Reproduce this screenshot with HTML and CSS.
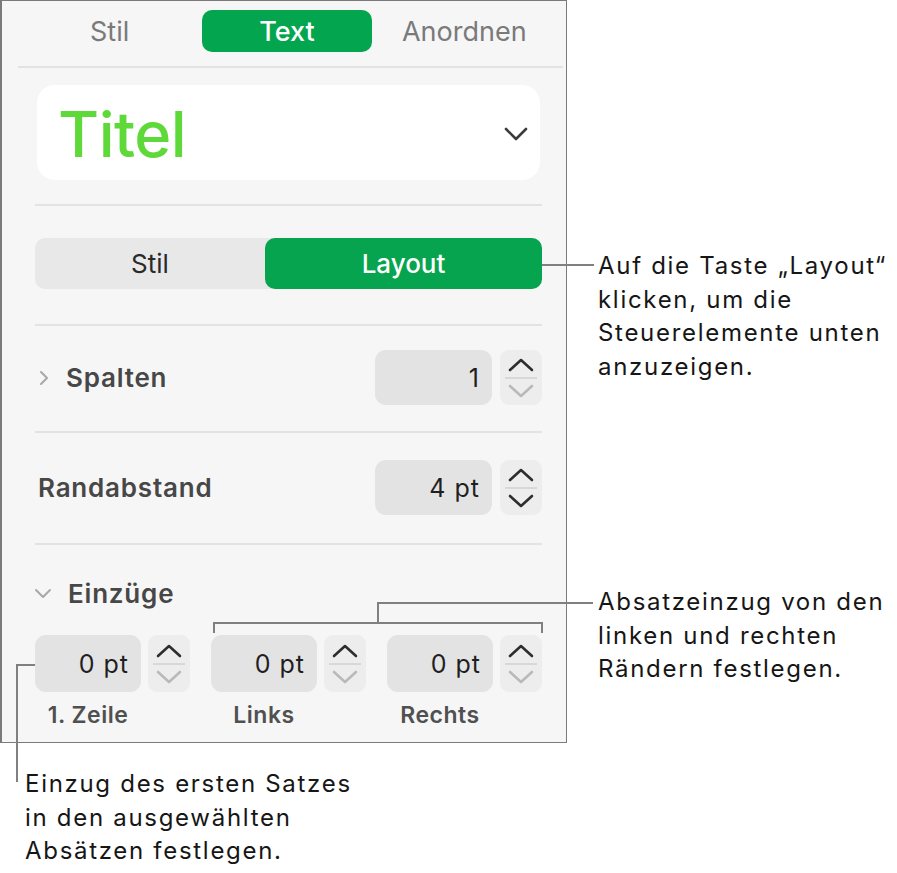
FILE: index.html
```html
<html>
    <head>
        <title>Text Layout</title>
        <link rel="stylesheet" href="styles.css">
    </head>
    <body>
        <div class="stage">
            <!--Seitenleiste mit den Textoptionen-->
            <div class="panel">
                <div class="tabs">
                    <div class="tab">Stil</div>
                    <div class="tab active">Text</div>
                    <div class="tab">Anordnen</div>
                </div>
                <div class="rule wide"></div>

                <div class="styleBox">
                    <span class="styleName">Titel</span>
                    <svg class="dropChevron" width="24" height="14" viewBox="0 0 24 14"><polyline points="2,2 12,12 22,2" fill="none" stroke="#3c3c3c" stroke-width="2.6" stroke-linecap="round" stroke-linejoin="round"/></svg>
                </div>
                <div class="rule r1"></div>

                <div class="segment">
                    <div class="segItem">Stil</div>
                    <div class="segItem on">Layout</div>
                </div>
                <div class="rule r2"></div>

                <div class="row r-spalten">
                    <svg class="disclosure" width="12" height="16" viewBox="0 0 12 16"><polyline points="3,2 9,8 3,14" fill="none" stroke="#a8a8a8" stroke-width="2" stroke-linecap="round" stroke-linejoin="round"/></svg>
                    <span class="rowLabel">Spalten</span>
                    <div class="field wideField">1</div>
                    <div class="stepper">
                        <svg class="up" width="26" height="14" viewBox="0 0 26 14"><polyline points="2,12 13,2 24,12" fill="none" stroke="#2e2e2e" stroke-width="2.6" stroke-linecap="round" stroke-linejoin="round"/></svg>
                        <span class="stepLine"></span>
                        <svg class="down" width="26" height="14" viewBox="0 0 26 14"><polyline points="2,2 13,12 24,2" fill="none" stroke="#b9b9b9" stroke-width="2.6" stroke-linecap="round" stroke-linejoin="round"/></svg>
                    </div>
                </div>
                <div class="rule r3"></div>

                <div class="row r-rand">
                    <span class="rowLabel noIcon">Randabstand</span>
                    <div class="field wideField">4 pt</div>
                    <div class="stepper">
                        <svg class="up" width="26" height="14" viewBox="0 0 26 14"><polyline points="2,12 13,2 24,12" fill="none" stroke="#2e2e2e" stroke-width="2.6" stroke-linecap="round" stroke-linejoin="round"/></svg>
                        <span class="stepLine"></span>
                        <svg class="down" width="26" height="14" viewBox="0 0 26 14"><polyline points="2,2 13,12 24,2" fill="none" stroke="#2e2e2e" stroke-width="2.6" stroke-linecap="round" stroke-linejoin="round"/></svg>
                    </div>
                </div>
                <div class="rule r4"></div>

                <div class="row r-einzug">
                    <svg class="disclosure open" width="18" height="12" viewBox="0 0 18 12"><polyline points="2,3 9,10 16,3" fill="none" stroke="#a8a8a8" stroke-width="2" stroke-linecap="round" stroke-linejoin="round"/></svg>
                    <span class="rowLabel">Einzüge</span>
                </div>

                <div class="indents">
                    <div class="indent">
                        <div class="indentTop">
                            <div class="field smallField">0 pt</div>
                            <div class="stepper">
                                <svg class="up" width="26" height="14" viewBox="0 0 26 14"><polyline points="2,12 13,2 24,12" fill="none" stroke="#2e2e2e" stroke-width="2.6" stroke-linecap="round" stroke-linejoin="round"/></svg>
                                <span class="stepLine"></span>
                                <svg class="down" width="26" height="14" viewBox="0 0 26 14"><polyline points="2,2 13,12 24,2" fill="none" stroke="#b9b9b9" stroke-width="2.6" stroke-linecap="round" stroke-linejoin="round"/></svg>
                            </div>
                        </div>
                        <div class="indentLabel">1. Zeile</div>
                    </div>
                    <div class="indent">
                        <div class="indentTop">
                            <div class="field smallField">0 pt</div>
                            <div class="stepper">
                                <svg class="up" width="26" height="14" viewBox="0 0 26 14"><polyline points="2,12 13,2 24,12" fill="none" stroke="#2e2e2e" stroke-width="2.6" stroke-linecap="round" stroke-linejoin="round"/></svg>
                                <span class="stepLine"></span>
                                <svg class="down" width="26" height="14" viewBox="0 0 26 14"><polyline points="2,2 13,12 24,2" fill="none" stroke="#b9b9b9" stroke-width="2.6" stroke-linecap="round" stroke-linejoin="round"/></svg>
                            </div>
                        </div>
                        <div class="indentLabel">Links</div>
                    </div>
                    <div class="indent">
                        <div class="indentTop">
                            <div class="field smallField">0 pt</div>
                            <div class="stepper">
                                <svg class="up" width="26" height="14" viewBox="0 0 26 14"><polyline points="2,12 13,2 24,12" fill="none" stroke="#2e2e2e" stroke-width="2.6" stroke-linecap="round" stroke-linejoin="round"/></svg>
                                <span class="stepLine"></span>
                                <svg class="down" width="26" height="14" viewBox="0 0 26 14"><polyline points="2,2 13,12 24,2" fill="none" stroke="#b9b9b9" stroke-width="2.6" stroke-linecap="round" stroke-linejoin="round"/></svg>
                            </div>
                        </div>
                        <div class="indentLabel">Rechts</div>
                    </div>
                </div>
            </div>

            <!--Hinweislinien und Beschriftungen-->
            <div class="line lineLayout"></div>
            <div class="note noteLayout">Auf die Taste „Layout“<br>klicken, um die<br>Steuerelemente unten<br>anzuzeigen.</div>

            <div class="line bracketH"></div>
            <div class="line bracketL"></div>
            <div class="line bracketR"></div>
            <div class="line bracketStem"></div>
            <div class="line bracketOut"></div>
            <div class="note noteRand">Absatzeinzug von den<br>linken und rechten<br>Rändern festlegen.</div>

            <div class="line firstH"></div>
            <div class="line firstV"></div>
            <div class="note noteFirst">Einzug des ersten Satzes<br>in den ausgewählten<br>Absätzen festlegen.</div>
        </div>
    </body>
</html>
```

FILE: styles.css
```css
body
{
    margin: 0;
    background-color: #ffffff;
    font-family: Inter, "Noto Sans", sans-serif;
}
.stage
{
    position: relative;
    width: 897px;
    height: 873px;
}
.panel
{
    box-sizing: border-box;
    width: 567px;
    height: 743px;
    border: 1px solid #7a7a7a;
    border-left-width: 2px;
    background-color: #f6f6f6;
    padding: 0 24px 0 33px;
    display: flex;
    flex-direction: column;
}
.tabs
{
    display: grid;
    grid-template-columns: repeat(3, 1fr);
    margin: 9px -11px 0 -14px;
    height: 42px;
}
.tab
{
    display: flex;
    align-items: center;
    justify-content: center;
    font-size: 27px;
    color: #7a7a7a;
    margin: 0 4px;
}
.tab.active
{
    background-color: #04a54f;
    color: #ffffff;
    font-weight: 500;
    border-radius: 10px;
}
.rule
{
    height: 2px;
    background-color: #e3e3e3;
}
.rule.wide
{
    margin: 14px -21px 0 -17px;
}
.styleBox
{
    margin: 17px 2px 0 2px;
    height: 95px;
    background-color: #ffffff;
    border-radius: 18px;
    display: flex;
    align-items: center;
    justify-content: space-between;
    padding: 0 12px 0 21px;
}
.styleName
{
    font-size: 63px;
    font-weight: 500;
    color: #5fd93a;
    letter-spacing: -0.5px;
    margin-top: 2px;
}
.dropChevron
{
    margin-top: 2px;
}
.r1
{
    margin-top: 24px;
}
.segment
{
    margin-top: 32px;
    height: 51px;
    display: flex;
    background-color: #e8e8e8;
    border-radius: 10px;
}
.segItem
{
    display: flex;
    align-items: center;
    justify-content: center;
    width: 230px;
    font-size: 26px;
    color: #2a2a2a;
}
.segItem.on
{
    flex: 1;
    background-color: #06a44e;
    color: #ffffff;
    font-weight: 500;
    border-radius: 10px;
}
.r2
{
    margin-top: 35px;
}
.row
{
    display: flex;
    align-items: center;
}
.r-spalten
{
    margin-top: 24px;
    height: 55px;
}
.r3
{
    margin-top: 26px;
}
.r-rand
{
    margin-top: 27px;
    height: 55px;
}
.r4
{
    margin-top: 28px;
}
.r-einzug
{
    margin-top: 34px;
    height: 28px;
}
.disclosure
{
    margin-left: 3px;
    width: 12px;
}
.disclosure.open
{
    margin-left: -1px;
    width: 18px;
}
.rowLabel
{
    font-size: 26px;
    font-weight: 600;
    letter-spacing: 0.8px;
    color: #474747;
    margin-left: 16px;
    flex: 1;
}
.rowLabel.noIcon
{
    margin-left: 3px;
}
.field
{
    box-sizing: border-box;
    height: 55px;
    background-color: #e3e3e3;
    border-radius: 11px;
    display: flex;
    align-items: center;
    justify-content: flex-end;
    padding-right: 12px;
    font-size: 25px;
    letter-spacing: 1px;
    color: #1f1f1f;
}
.wideField
{
    width: 117px;
}
.stepper
{
    box-sizing: border-box;
    width: 42px;
    height: 55px;
    margin-left: 8px;
    background-color: #ededed;
    border-radius: 9px;
    display: flex;
    flex-direction: column;
    align-items: center;
    justify-content: center;
}
.stepper .up
{
    margin-bottom: 5px;
}
.stepper .down
{
    margin-top: 5px;
}
.stepLine
{
    width: 32px;
    height: 2px;
    background-color: #d8d8d8;
}
.indents
{
    margin-top: 28px;
    display: flex;
    justify-content: space-between;
}
.indent
{
    width: 155px;
}
.indentTop
{
    display: flex;
}
.smallField
{
    width: 106px;
    height: 57px;
}
.indentTop .stepper
{
    margin-left: 7px;
    height: 57px;
}
.indentLabel
{
    width: 106px;
    text-align: center;
    margin-top: 9px;
    font-size: 23px;
    font-weight: 600;
    letter-spacing: 0.5px;
    color: #505050;
}
.line
{
    position: absolute;
    background-color: #808080;
}
.lineLayout
{
    left: 542px;
    top: 264px;
    width: 52px;
    height: 2px;
}
.bracketH
{
    left: 213px;
    top: 622px;
    width: 330px;
    height: 2px;
}
.bracketL
{
    left: 213px;
    top: 622px;
    width: 2px;
    height: 11px;
}
.bracketR
{
    left: 541px;
    top: 622px;
    width: 2px;
    height: 11px;
}
.bracketStem
{
    left: 377px;
    top: 602px;
    width: 2px;
    height: 21px;
}
.bracketOut
{
    left: 377px;
    top: 602px;
    width: 216px;
    height: 2px;
}
.firstH
{
    left: 16px;
    top: 664px;
    width: 19px;
    height: 2px;
}
.firstV
{
    left: 16px;
    top: 664px;
    width: 2px;
    height: 118px;
}
.note
{
    position: absolute;
    font-size: 24px;
    letter-spacing: 1.7px;
    line-height: 33.5px;
    color: #161616;
}
.noteLayout
{
    left: 598px;
    top: 249px;
}
.noteRand
{
    left: 598px;
    top: 585px;
}
.noteFirst
{
    left: 25px;
    top: 767px;
}
```
